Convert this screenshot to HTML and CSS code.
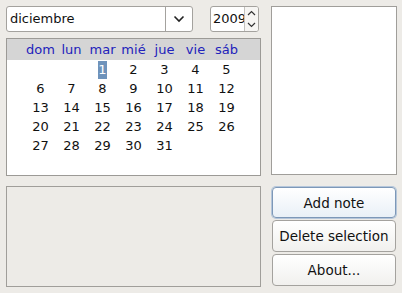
FILE: index.html
```html
<!DOCTYPE html>
<html lang="es">
<head>
    <meta charset="UTF-8">
    <title>Calendario</title>
    <link rel="stylesheet" href="styles.css">
</head>
<body>
<div class="window">
    <div class="left">
        <div class="toolbar">
            <div class="combo">
                <span class="combo-text">diciembre</span>
                <span class="combo-btn">
                    <svg width="12" height="8" viewBox="0 0 12 8"><path d="M1.5 1.5 L6 6 L10.5 1.5" fill="none" stroke="#222" stroke-width="1.6"/></svg>
                </span>
            </div>
            <div class="spin">
                <span class="spin-text">2009</span>
                <span class="spin-btns">
                    <span class="spin-arrow"><svg width="9" height="6" viewBox="0 0 9 6"><path d="M1 5 L4.5 1.5 L8 5" fill="none" stroke="#333" stroke-width="1.2"/></svg></span>
                    <span class="spin-arrow"><svg width="9" height="6" viewBox="0 0 9 6"><path d="M1 1 L4.5 4.5 L8 1" fill="none" stroke="#333" stroke-width="1.2"/></svg></span>
                </span>
            </div>
        </div>

        <div class="calendar">
            <div class="cal-head">
                <span>dom</span><span>lun</span><span>mar</span><span>mié</span><span>jue</span><span>vie</span><span>sáb</span>
            </div>
            <div class="cal-days">
                <span></span><span></span><span><b class="selected">1</b></span><span>2</span><span>3</span><span>4</span><span>5</span>
                <span>6</span><span>7</span><span>8</span><span>9</span><span>10</span><span>11</span><span>12</span>
                <span>13</span><span>14</span><span>15</span><span>16</span><span>17</span><span>18</span><span>19</span>
                <span>20</span><span>21</span><span>22</span><span>23</span><span>24</span><span>25</span><span>26</span>
                <span>27</span><span>28</span><span>29</span><span>30</span><span>31</span>
            </div>
        </div>

        <div class="notes"></div>
    </div>

    <div class="right">
        <div class="list"></div>
        <div class="buttons">
            <button class="btn default">Add note</button>
            <button class="btn">Delete selection</button>
            <button class="btn">About...</button>
        </div>
    </div>
</div>
</body>
</html>
```

FILE: styles.css
```css
html, body {
    margin: 0;
    padding: 0;
    background-color: #edebe7;
    font-family: "DejaVu Sans", sans-serif;
    font-size: 13px;
    color: #111;
}

.window {
    display: flex;
    gap: 10px;
    padding: 6px 5px 6px 6px;
    width: 402px;
    height: 293px;
    box-sizing: border-box;
}

.left {
    width: 255px;
    display: flex;
    flex-direction: column;
}

.right {
    width: 126px;
    display: flex;
    flex-direction: column;
}

.toolbar {
    display: flex;
    height: 26px;
    gap: 17px;
}

.combo {
    width: 187px;
    display: flex;
    background-color: #fff;
    border: 1px solid #a4a29e;
    border-radius: 3px;
    box-sizing: border-box;
}

.combo-text {
    flex: 1;
    padding-left: 3px;
    line-height: 24px;
    border-right: 1px solid #a4a29e;
}

.combo-btn {
    width: 26px;
    display: flex;
    align-items: center;
    justify-content: center;
}

.spin {
    width: 49px;
    display: flex;
    background-color: #fff;
    border: 1px solid #a4a29e;
    border-radius: 3px;
    box-sizing: border-box;
    overflow: hidden;
}

.spin-text {
    width: 31px;
    flex-shrink: 0;
    overflow: hidden;
    white-space: nowrap;
    padding-left: 2px;
    line-height: 24px;
}

.spin-btns {
    flex: 1;
    display: flex;
    flex-direction: column;
    border-left: 1px solid #c4c2be;
    background-color: #f6f5f3;
}

.spin-arrow {
    flex: 1;
    display: flex;
    align-items: center;
    justify-content: center;
}

.calendar {
    margin-top: 6px;
    height: 138px;
    background-color: #fff;
    border: 1px solid #9c9a96;
    box-sizing: border-box;
}

.cal-head, .cal-days {
    display: grid;
    grid-template-columns: repeat(7, 31px);
    justify-content: center;
    text-align: center;
}

.cal-head {
    background-color: #d5d5d5;
    color: #2222bb;
    height: 21px;
    line-height: 21px;
}

.cal-days span {
    height: 19px;
    line-height: 19px;
}

.selected {
    font-weight: normal;
    background-color: #6f93bb;
    color: #fff;
    padding: 1px 0 2px;
}

.notes {
    margin-top: 10px;
    height: 101px;
    border: 1px solid #a09e9a;
    box-sizing: border-box;
}

.list {
    height: 169px;
    background-color: #fff;
    border: 1px solid #a09e9a;
    box-sizing: border-box;
}

.buttons {
    margin-top: 12px;
    display: flex;
    flex-direction: column;
    gap: 2px;
}

.btn {
    height: 32px;
    margin: 0 1px;
    font-family: "DejaVu Sans", sans-serif;
    font-size: 13.5px;
    color: #111;
    background: linear-gradient(#ffffff, #f1f0ee);
    border: 1px solid #a4a29e;
    border-radius: 4px;
    padding: 0;
}

.btn.default {
    height: 31px;
    border-color: #7d98b8;
    box-shadow: 0 0 0 1px #b5c6da;
    background: linear-gradient(#ffffff, #e9f0f7);
}
```
